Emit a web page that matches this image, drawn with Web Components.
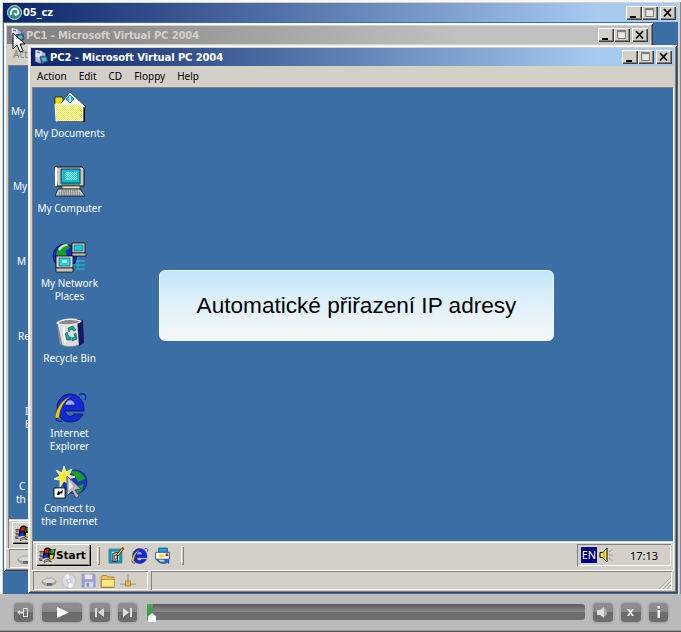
<!DOCTYPE html>
<html>
<head>
<meta charset="utf-8">
<title>05_cz</title>
<style>
  html, body { margin: 0; padding: 0; background: #d4d0c8; overflow: hidden; }
</style>
</head>
<body>
<player-app></player-app>

<script>
// pixel-ish icons, all drawn on a 32 unit box
const ICONS = {
  documents: `
    <defs><pattern id="d" width="2" height="2" patternUnits="userSpaceOnUse"><rect width="2" height="2" fill="#f0ec20"/><rect width="1" height="1" fill="#fff"/><rect x="1" y="1" width="1" height="1" fill="#fff"/></pattern></defs>
    <path d="M1 6h7l1 2v6H1z" fill="#f0e000" stroke="#000" stroke-width=".6"/>
    <path d="M5 15L16 1l16 15-4 3z" fill="#fff" stroke="#223" stroke-width=".8"/>
    <path d="M16 4l4 4-4 4-4-4z" fill="#18b8e8" stroke="#0870a8" stroke-width=".8"/>
    <path d="M15 5h2v6h-2z" fill="#9ff"/>
    <path d="M3 31h28V17l-3-2v14H3z" fill="#000"/>
    <path d="M1 13h25l3 3v14H2z" fill="url(#d)" stroke="#fff" stroke-width=".8"/>`,
  computer: `
    <defs><pattern id="c" width="2" height="2" patternUnits="userSpaceOnUse"><rect width="2" height="2" fill="#18d8e8"/><rect width="1" height="1" fill="#a8ffff"/><rect x="1" y="1" width="1" height="1" fill="#a8ffff"/></pattern></defs>
    <path d="M1 1h27l2 2v17H3z" fill="#c8c8c0" stroke="#000" stroke-width=".9"/>
    <path d="M1 1h2v19H1z" fill="#fff"/>
    <path d="M7 3h19v15H7z" fill="#18b8d8" stroke="#111" stroke-width=".8"/>
    <path d="M11 6h12v8H11z" fill="url(#c)"/>
    <path d="M7 16h19v2H7z" fill="#00808c"/>
    <path d="M8 20h18v3H8z" fill="#e4e4dc" stroke="#222" stroke-width=".7"/>
    <path d="M4 23h22l5 7H1z" fill="#ccccc4" stroke="#111" stroke-width=".8"/>
    <path d="M7 25h17M5 27h22M5 29h24" stroke="#555" stroke-width="1" stroke-dasharray="1.4 .8"/>`,
  network: `
    <circle cx="11" cy="15" r="12" fill="#1428c0" stroke="#001060" stroke-width=".8"/>
    <path d="M2 14C3 7 8 3 14 3l2 4-5 3 2 4-6 5-2-1zM16 18l4 2-3 6-3-2z" fill="#18a020"/>
    <path d="M4 8c2-3 5-5 9-5l1 2c-4 0-7 2-8 5z" fill="#c8f0b0"/>
    <path d="M18 2h13v10H18z" fill="#d0d0c8" stroke="#000" stroke-width=".8"/>
    <path d="M20 4h9v6h-9z" fill="#18c8e0" stroke="#044" stroke-width=".5"/>
    <path d="M18 12h14v3H18z" fill="#c0c0b8" stroke="#000" stroke-width=".7"/>
    <path d="M2 15h17v12H2z" fill="#d4d4cc" stroke="#000" stroke-width=".8"/>
    <path d="M5 17h11v8H5z" fill="#28d0e8" stroke="#033" stroke-width=".5"/>
    <path d="M8 19h5v3H8z" fill="#b0ffff"/>
    <path d="M2 27h17v4H2z" fill="#c4c4bc" stroke="#000" stroke-width=".7"/>
    <path d="M22 20h9M18 24h13M22 28h9M24 16v12" stroke="#18c8d8" stroke-width="1" fill="none"/>`,
  recycle: `
    <path d="M3 6c6-4 17-5 25-2l1 22c-5 5-15 6-21 3z" fill="#dcdcdc" stroke="#777" stroke-width=".6"/>
    <path d="M23 3l6 1 1 23-5 3z" fill="#181860"/>
    <path d="M3 7c7-5 18-4 24-2-2 3-18 6-24 2z" fill="#888" stroke="#eee" stroke-width="1.2"/>
    <path d="M3 8l5 21c-2-1-2-1-2-1z" fill="#999"/>
    <path d="M9 11h2l1 17-2-1z" fill="#fff"/>
    <path d="M14 12l5-2 3 4-2 1-3-2-2 3zM22 17l1 6-5 2v-3l3-1-1-3zM13 24l-2-6 2-2 2 5 2 0v3z" fill="#10a8a8" stroke="#044" stroke-width=".5"/>`,
  ie: `
    <path d="M25 4c5-3 8 0 6 5M3 25c-2 4 0 6 5 5" fill="none" stroke="#1020c0" stroke-width="1.4"/>
    <path d="M16 3C9 3 3 9 3 17s6 14 13 14c6 0 11-3 13-8h-9c-1 2-3 3-5 2-2 0-4-3-4-5h19c1-9-5-17-14-17z" fill="#1428d8" stroke="#000a70" stroke-width=".8"/>
    <path d="M11 14c0-3 3-5 5-5s5 2 5 5z" fill="#9fb0f4" stroke="#000a70" stroke-width=".5"/>
    <path d="M1 27C2 18 7 9 17 5c-7 5-11 12-12 22z" fill="#e8c818" stroke="#443" stroke-width=".5"/>`,
  connect: `
    <circle cx="21" cy="16" r="12" fill="#1838c0" stroke="#001060" stroke-width=".6"/>
    <path d="M16 6c6-3 12 0 15 7l-7 3-3-6zM23 20l7-2-3 8-5 2z" fill="#18a020"/>
    <path d="M10 0l2 6 6-3-3 6 6 2-7 2 2 6-6-4-4 6 0-7-6-1 6-3-4-6 6 3z" fill="#f8f020" stroke="#fff" stroke-width=".8"/>
    <path d="M12 7l2 3 3-1-2 3-3-1z" fill="#fff"/>
    <path d="M13 10v20l5-5 4 7 3-2-4-6 6-1z" fill="#b8b8b8" stroke="#504878" stroke-width="1"/>
    <path d="M15 14v10l4-3z" fill="#eee"/>
    <path d="M0 22h11v10H0z" fill="#fff" stroke="#000" stroke-width=".8"/>
    <path d="M3 29l1-4 2 1 3-2-1 4-1-1-2 2z" fill="#000"/>`,
  vpc: `
    <path d="M5 2l12 2 8 5v12l-10 8-11-4z" fill="#b4b4dc" stroke="#505088" stroke-width="1.400"/>
    <path d="M5 2l12 2v14L5 16z" fill="#e4e4f4"/>
    <path d="M8 5l6 1v3l-6-1z" fill="#7878b0"/>
    <path d="M14 15l14-1 2 11-13 5z" fill="#2878a8" stroke="#103858" stroke-width="1.200"/>
    <path d="M18 18l8-1 1 6-8 2z" fill="#58c0a0"/>`,
  flag: `
    <g transform="translate(0 -4) scale(1.05 1.4)">
    <path d="M9 6c4-3 8-3 11-1l-3 13c-3-2-7-2-11 1z" fill="#000"/>
    <path d="M20 5c3 2 6 2 10 0l-3 13c-3 2-7 2-10 0z" fill="#000"/>
    <path d="M11 7c2-1 5-2 7-1l-1 5c-2-1-5 0-7 1z" fill="#e81010"/>
    <path d="M21 6c2 1 5 1 7 0l-1 5c-2 1-5 1-7 0z" fill="#10b020"/>
    <path d="M9 14c2-1 5-2 7-1l-1 5c-2-1-5 0-7 1z" fill="#1830e8"/>
    <path d="M20 13c2 1 4 1 6 0l-1 5c-2 1-4 1-6 0z" fill="#f0e000"/>
    <path d="M9 22c4-3 8-3 11-1l2 2c-4-2-8-2-12 1zM1 9h8M2 11h7M1 14h6M2 16h5M0 19h6M1 21h5" stroke="#000" stroke-width="1" fill="none"/>
    <path d="M1 9h3M1 14h3M0 19h3" stroke="#e01010" stroke-width="1"/>
    <path d="M1 11h3M1 16h3M1 21h3" stroke="#1830e8" stroke-width="1"/>
    </g>`,
  desktop: `
    <path d="M2 4h24v26H2z" fill="#f0f0e8" stroke="#000" stroke-width="1"/>
    <path d="M2 4h24v26H2zM7 9v16h14V9z" fill="#1090c0" fill-rule="evenodd"/>
    <path d="M9 12l9-2v16l-9 1z" fill="#d4d0c8" stroke="#000" stroke-width="1.500"/>
    <path d="M12 16l5-1v7l-5 1z" fill="#fff" stroke="#000" stroke-width="1.200"/>
    <path d="M16 15L27 1l3 2-11 14z" fill="#f0d020" stroke="#000" stroke-width="1.200"/>
    <path d="M27 1l3 2-2 2-3-2z" fill="#e02020"/>`,
  outlook: `
    <path d="M9 2h16v8H9z" fill="#18a8e0" stroke="#003878" stroke-width="1.400"/>
    <path d="M3 10h26v13H3z" fill="#fff" stroke="#003878" stroke-width="1.400"/>
    <path d="M9 13h9v7H9z" fill="#f8e030"/>
    <path d="M22 12h5v5h-5z" fill="#e82020"/>
    <path d="M8 24c2 5 9 6 14 3l-3-3h9v7l-3-2c-6 4-16 2-20-5z" fill="#1878d8" stroke="#003878" stroke-width="1"/>`,
  speaker: `
    <path d="M2 11h5l9-9v28l-9-9H2z" fill="#f4ec40" stroke="#000" stroke-width="2"/>
    <path d="M10 8v16" stroke="#a89800" stroke-width="2"/>
    <path d="M20 16h8M20 10l7-5M20 22l7 5" stroke="#999" stroke-width="2"/>`,
  disk: `
    <path d="M2 16l10-6h10l8 6v4l-8 5H10l-8-5z" fill="#a8a8a8" stroke="#777" stroke-width="1"/>
    <path d="M2 16l9 4h11l8-4-8-5H11z" fill="#d8d8d8"/>
    <path d="M12 20h10v5H12z" fill="#666"/>`,
  cd: `
    <circle cx="16" cy="16" r="14" fill="#dcdce8" stroke="#b0b0b8" stroke-width="1.400"/>
    <path d="M16 16L7 6a14 14 0 0 1 9-4zM16 16l9 10a14 14 0 0 1-9 4z" fill="#f8f8ff"/>
    <circle cx="16" cy="16" r="4" fill="#fff" stroke="#a8a8b0" stroke-width="1.400"/>`,
  floppy: `
    <path d="M2 2h26l2 2v26H2z" fill="#9aa0d8" stroke="#8088b8" stroke-width="1"/>
    <path d="M8 3h16v10H8z" fill="#e8e8f0"/>
    <path d="M8 19h18v11H8z" fill="#d8d8e4"/>
    <path d="M12 21h5v8h-5z" fill="#8088b8"/>`,
  folder: `
    <path d="M2 8l2-3h9l3 3h12v21H2z" fill="#e8c450" stroke="#a08020" stroke-width="1.600"/>
    <path d="M3 13h26v15H3z" fill="#fbe78c" stroke="#a08020" stroke-width="1.200"/>`,
  lan: `
    <path d="M16 3v14" stroke="#a0a0a0" stroke-width="3"/>
    <path d="M0 22h32" stroke="#999" stroke-width="3"/>
    <path d="M0 20h32" stroke="#eee" stroke-width="1"/>
    <path d="M11 16h10v10H11z" fill="#e8b840" stroke="#a87810" stroke-width="1.400"/>`
};

// what is left uncovered of the back window's icon labels: [indent, text] per line
const BACK_LABELS = [
  [[2, 'My']],
  [[4, 'My']],
  [[8, 'M']],
  [[9, 'Re']],
  [[16, 'I'], [16, 'E']],
  [[10, 'C'], [7, 'th']]
];

class WinIcon extends HTMLElement {
  connectedCallback() {
    const size = this.getAttribute('size') || 32;
    this.attachShadow({ mode: 'open' });
    this.shadowRoot.innerHTML = `
      <style>
        :host { display: block; width: ${size}px; height: ${size}px; flex: none; }
        svg { display: block; width: 100%; height: 100%; overflow: visible; }
      </style>
      <svg viewBox="0 0 32 32">${ICONS[this.getAttribute('name')]}</svg>`;
  }
}

class CaptionButton extends HTMLElement {
  connectedCallback() {
    const kind = this.getAttribute('kind');
    const glyph = {
      min: '<path d="M4 10h6v2H4z" fill="#000"/>',
      max: '<path d="M3.500 2.500h8v8h-8z" fill="none" stroke="#808080"/><path d="M3 2h9v2H3z" fill="#808080"/><path d="M5 5h6v5H5z" fill="#e8e6e0"/>',
      close: '<path d="M4 3l7 7.500M11 3l-7 7.500" fill="none" stroke="#000" stroke-width="1.800"/>'
    }[kind];
    this.attachShadow({ mode: 'open' });
    this.shadowRoot.innerHTML = `
      <style>
        :host {
          display: block; width: 16px; height: 14px; flex: none;
          background: #d4d0c8;
          box-shadow: inset 1px 1px 0 #fff, inset -1px -1px 0 #404040, inset -2px -2px 0 #808080;
        }
        :host([kind=close]) { margin-left: 2px; }
        svg { display: block; width: 15px; height: 14px; }
      </style>
      <svg viewBox="0 0 15 14">${glyph}</svg>`;
  }
}

class TitleBar extends HTMLElement {
  connectedCallback() {
    this.attachShadow({ mode: 'open' });
    this.shadowRoot.innerHTML = `
      <style>
        :host {
          display: flex; align-items: center; height: var(--title-h, 18px); flex: none;
          padding: 0 2px; gap: 1px; overflow: hidden;
          background: linear-gradient(90deg, #0a246a 0%, #a6caf0 88%, #a6caf0 100%);
          color: #fff;
          font: bold 10px "DejaVu Sans", sans-serif;
          letter-spacing: -0.12px;
          white-space: nowrap;
        }
        :host([inactive]) {
          background: linear-gradient(90deg, #808080 0%, #c0c0c0 70%);
          color: #d4d0c8;
        }
        .text { flex: 1; }
        .btns { display: flex; }
      </style>
      <slot name="icon"></slot>
      <span class="text"><slot></slot></span>
      <span class="btns">
        <caption-button kind="min"></caption-button>
        <caption-button kind="max"></caption-button>
        <caption-button kind="close"></caption-button>
      </span>`;
  }
}

class DesktopIcon extends HTMLElement {
  connectedCallback() {
    this.attachShadow({ mode: 'open' });
    this.shadowRoot.innerHTML = `
      <style>
        :host {
          display: flex; flex-direction: column; align-items: center;
          width: 73px; color: #fff; text-align: center;
        }
        .label { margin-top: 4px; line-height: 13px; width: 72px; }
      </style>
      <win-icon name="${this.getAttribute('icon')}"></win-icon>
      <div class="label"><slot></slot></div>`;
  }
}

class VmTaskbar extends HTMLElement {
  connectedCallback() {
    this.attachShadow({ mode: 'open' });
    this.shadowRoot.innerHTML = `
      <style>
        :host {
          display: flex; align-items: center; height: 29px; flex: none;
          padding: 0 3px 2px 3px; box-sizing: border-box; background: #d4d0c8;
          box-shadow: inset 0 1px 0 #d4d0c8, inset 0 2px 0 #fff;
        }
        .start {
          display: flex; align-items: center; height: 22px; width: 55px; box-sizing: border-box;
          padding-left: 3px; margin-top: 1px; font: bold 10.500px "DejaVu Sans", sans-serif; color: #000;
          box-shadow: inset 1px 1px 0 #fff, inset -1px -1px 0 #000, inset -2px -2px 0 #808080;
        }
        .grip {
          width: 3px; height: 19px; margin-top: 1px; flex: none;
          box-shadow: inset 1px 1px 0 #fff, inset -1px -1px 0 #808080;
        }
        .quick { display: flex; gap: 6px; margin: 1px 10px 0 8px; }
        .spacer { flex: 1; }
        .tray {
          display: flex; align-items: center; width: 94px; height: 22px; box-sizing: border-box;
          margin-top: 1px; padding-left: 4px; margin-right: -1px;
          box-shadow: inset 1px 1px 0 #808080, inset -1px -1px 0 #fff;
        }
        .en {
          width: 16px; height: 16px; background: #000080; color: #fff; font-size: 11px;
          line-height: 16px; text-align: center;
        }
        .clock { margin-left: 15px; color: #000; font-size: 11px; }
        win-icon.sp { margin-left: 2px; }
      </style>
      <div class="start"><win-icon name="flag" size="17"></win-icon><span>Start</span></div>
      <div class="grip" style="margin-left:6px"></div>
      <div class="quick">
        <win-icon name="desktop" size="17"></win-icon>
        <win-icon name="ie" size="17"></win-icon>
        <win-icon name="outlook" size="17"></win-icon>
      </div>
      <div class="grip"></div>
      <div class="spacer"></div>
      <div class="tray">
        <div class="en">EN</div>
        <win-icon class="sp" name="speaker" size="16"></win-icon>
        <div class="clock">17:13</div>
      </div>`;
  }
}

class VmStatus extends HTMLElement {
  connectedCallback() {
    this.attachShadow({ mode: 'open' });
    this.shadowRoot.innerHTML = `
      <style>
        :host {
          display: flex; gap: 3px; height: 19px; flex: none; margin-top: 1px; padding: 0 2px;
          box-shadow: 0 -1px 0 #fff;
        }
        .icons {
          display: flex; align-items: center; gap: 4px; width: 115px; box-sizing: border-box; padding-left: 8px;
          box-shadow: inset 1px 1px 0 #808080, inset -1px -1px 0 #fff;
        }
        .rest {
          flex: 1; position: relative;
          box-shadow: inset 1px 1px 0 #808080, inset -1px -1px 0 #fff;
        }
        svg { position: absolute; right: 1px; bottom: 1px; }
      </style>
      <div class="icons">
        <win-icon name="disk" size="16"></win-icon>
        <win-icon name="cd" size="16"></win-icon>
        <win-icon name="floppy" size="15"></win-icon>
        <win-icon name="folder" size="16"></win-icon>
        <win-icon name="lan" size="16"></win-icon>
      </div>
      <div class="rest">
        <svg width="12" height="12" viewBox="0 0 12 12">
          <path d="M12 0v1L1 12H0zM12 4v1L5 12H4zM12 8v1L9 12H8z" fill="#808080"/>
          <path d="M12 1v1L2 12H1zM12 5v1L6 12H5zM12 9v1L10 12H9z" fill="#fff"/>
        </svg>
      </div>`;
  }
}

class VmWindow extends HTMLElement {
  connectedCallback() {
    const inactive = this.hasAttribute('inactive');
    // the back window only ever shows the first menu entry, the rest lie under PC2
    const menu = inactive ? ['Action'] : ['Action', 'Edit', 'CD', 'Floppy', 'Help'];
    const icons = inactive
      ? BACK_LABELS.map(lines => `<div class="back">${lines.map(([x, t]) => `<div style="padding-left:${x}px">${t}</div>`).join('')}</div>`).join('')
      : `<desktop-icon icon="documents">My Documents</desktop-icon>
         <desktop-icon icon="computer">My Computer</desktop-icon>
         <desktop-icon icon="network">My Network<br>Places</desktop-icon>
         <desktop-icon icon="recycle">Recycle Bin</desktop-icon>
         <desktop-icon icon="ie">Internet<br>Explorer</desktop-icon>
         <desktop-icon icon="connect">Connect to<br>the Internet</desktop-icon>`;
    this.attachShadow({ mode: 'open' });
    this.shadowRoot.innerHTML = `
      <style>
        :host {
          position: absolute; display: flex; flex-direction: column;
          width: 649px; height: 548px; box-sizing: border-box; padding: 3px;
          background: #d4d0c8;
          box-shadow: inset 1px 1px 0 #f4f2ec, inset -1px -1px 0 #404040, inset 2px 2px 0 #fff, inset -2px -2px 0 #808080;
          font: 10px "Noto Sans", sans-serif;
        }
        .menu {
          display: flex; gap: 12px; height: 19px; padding-bottom: 1px; flex: none; align-items: center;
          padding-left: 6px; color: #000;
        }
        :host([inactive]) .menu { color: #808080; }
        .screen {
          flex: 1; min-height: 0; display: flex; flex-direction: column;
          margin: 1px 0 0 1px; position: relative; overflow: hidden;
          border-top: 1px solid #808080; border-left: 1px solid #808080;
          border-right: 1px solid #fff; background: #3a6ea5;
        }
        .desktop {
          flex: 1; min-height: 0; position: relative;
          display: grid; grid-auto-rows: 75px; justify-content: start; padding-top: 3px;
        }
        .back { padding-top: 36px; line-height: 13px; color: #fff; }
      </style>
      <title-bar ${inactive ? 'inactive' : ''}>
        <win-icon slot="icon" name="vpc" size="16"></win-icon>
        ${this.getAttribute('label')}
      </title-bar>
      <div class="menu">${menu.map(m => `<span>${m}</span>`).join('')}</div>
      <div class="screen">
        <div class="desktop">
          ${icons}
          <slot></slot>
        </div>
        <vm-taskbar></vm-taskbar>
      </div>
      <vm-status></vm-status>`;
  }
}

class SlideCaption extends HTMLElement {
  connectedCallback() {
    this.attachShadow({ mode: 'open' });
    this.shadowRoot.innerHTML = `
      <style>
        :host {
          position: absolute; left: 126px; top: 182px; width: 395px; height: 71px;
          display: flex; align-items: center; justify-content: center; box-sizing: border-box;
          border-radius: 6px; border: 1px solid #eef8ff;
          background: linear-gradient(180deg, #c2e6fb 0%, #dcf0fb 40%, #f3f6f7 90%);
          color: #000; font: 22.600px "Liberation Sans", Arial, sans-serif;
        }
      </style>
      <slot></slot>`;
  }
}

class PlayerButton extends HTMLElement {
  connectedCallback() {
    const w = this.getAttribute('width') || 19;
    const glyph = {
      back: '<path d="M3 9l3-2v1.500h3V5h5v9H9v-3.500H6V12z M10 6v7h3V6z" fill="#ddd" fill-rule="evenodd"/>',
      play: '<path d="M15 4l12 5.500L15 15z" fill="#fff"/>',
      prev: '<path d="M5 5h2v9H5zM14 5v9l-6-4.500z" fill="#d8d8d8"/>',
      next: '<path d="M5 5v9l6-4.500zM12 5h2v9h-2z" fill="#e0e0e0"/>',
      sound: '<path d="M4 7h3l4-3v11l-4-3H4z" fill="#ddd"/><path d="M12 5a6 6 0 0 1 0 9l-1-1V6z" fill="#aaa"/>',
      close: '<path d="M6 6h2l1.500 2 1.500-2h2l-2.500 3.500L13 13h-2l-1.500-2L8 13H6l2.500-3.500z" fill="#eee"/>',
      info: '<path d="M8.500 3h2.500v2.500H8.500zM8.500 7h2.500v8H8.500z" fill="#eee"/>'
    }[this.getAttribute('glyph')];
    this.attachShadow({ mode: 'open' });
    this.shadowRoot.innerHTML = `
      <style>
        :host {
          display: block; position: relative; flex: none; width: ${w}px; height: 19px; border-radius: 4px;
          background: linear-gradient(180deg, #8f8f8f 0%, #888 50%, #6b6b6b 50%, #6e6e6e 100%);
          box-shadow: 0 0 0 1px #a9a9a9, 0 0 0 2px #b2b2b2;
        }
        svg { display: block; width: 100%; height: 100%; }
      </style>
      <svg viewBox="0 0 ${w} 19">${glyph}</svg>`;
  }
}

class PlayerControls extends HTMLElement {
  connectedCallback() {
    this.attachShadow({ mode: 'open' });
    this.shadowRoot.innerHTML = `
      <style>
        :host {
          display: flex; align-items: center; height: 38px; flex: none; box-sizing: border-box;
          padding: 0 13px 2px 14px; background: #bababa;
          box-shadow: inset 0 -1px 0 #555, inset 0 -2px 0 #999;
        }
        .group { display: flex; gap: 8px; }
        .track {
          flex: 1; height: 16px; margin: 0 8px 0 10px; position: relative; border-radius: 1px 3px 3px 1px;
          background: linear-gradient(180deg, #5c5c5c 0%, #8a8a8a 50%, #6e6e6e 50%, #707070 100%);
        }
        .done {
          position: absolute; left: 0; top: 0; width: 6px; height: 100%;
          background: linear-gradient(180deg, #55a055, #2f9a3a);
        }
        .knob {
          position: absolute; left: 1px; top: 9px; width: 8px; height: 9px; background: #fff;
          clip-path: polygon(50% 0, 100% 40%, 100% 100%, 0 100%, 0 40%);
        }
      </style>
      <div class="group">
        <player-button glyph="back"></player-button>
        <player-button glyph="play" width="40" style="margin-left:1px"></player-button>
        <player-button glyph="prev" width="20"></player-button>
        <player-button glyph="next"></player-button>
      </div>
      <div class="track"><div class="done"></div><div class="knob"></div></div>
      <div class="group">
        <player-button glyph="sound" width="20"></player-button>
        <player-button glyph="close" width="20"></player-button>
        <player-button glyph="info"></player-button>
      </div>`;
  }
}

class PlayerApp extends HTMLElement {
  connectedCallback() {
    this.attachShadow({ mode: 'open' });
    this.shadowRoot.innerHTML = `
      <style>
        :host {
          display: flex; flex-direction: column; position: relative;
          width: 681px; height: 632px; overflow: hidden; background: #d4d0c8;
        }
        .frame {
          flex: 1; min-height: 0; display: flex; flex-direction: column;
          padding: 3px 3px 0 3px;
          box-shadow: inset 1px 1px 0 #f8f6f0, inset 2px 2px 0 #fff, inset -1px 0 0 #888;
        }
        .title { --title-h: 19px; }
        .stage { flex: 1; min-height: 0; position: relative; background: #3a6ea5; }
        .logo { display: block; width: 15px; height: 15px; margin-left: 2px; }
        .pc1 { left: 1px; top: 1px; }
        .pc2 { left: 25px; top: 23px; }
        .cursor { position: absolute; left: 12px; top: 32px; }
      </style>
      <div class="frame">
        <title-bar class="title">
          <svg slot="icon" class="logo" viewBox="0 0 15 15">
            <circle cx="7.500" cy="7.500" r="7" fill="#2f8f80" stroke="#c8e0d8" stroke-width="1"/>
            <path d="M4 10c-1-4 2-7 5-6 3 1 3 5 0 6l-2-2" fill="none" stroke="#fff" stroke-width="1.800"/>
          </svg>
          05_cz
        </title-bar>
        <div class="stage">
          <vm-window class="pc1" label="PC1 - Microsoft Virtual PC 2004" inactive></vm-window>
          <vm-window class="pc2" label="PC2 - Microsoft Virtual PC 2004">
            <slide-caption>Automatické přiřazení IP adresy</slide-caption>
          </vm-window>
        </div>
      </div>
      <player-controls></player-controls>
      <svg class="cursor" width="14" height="22" viewBox="0 0 14 22">
        <path d="M1 1v16l4-4 3 7 3-1-3-7h5z" fill="#fff" stroke="#000" stroke-width="1"/>
      </svg>`;
  }
}

customElements.define('win-icon', WinIcon);
customElements.define('caption-button', CaptionButton);
customElements.define('title-bar', TitleBar);
customElements.define('desktop-icon', DesktopIcon);
customElements.define('vm-taskbar', VmTaskbar);
customElements.define('vm-status', VmStatus);
customElements.define('slide-caption', SlideCaption);
customElements.define('player-button', PlayerButton);
customElements.define('player-controls', PlayerControls);
customElements.define('vm-window', VmWindow);
customElements.define('player-app', PlayerApp);
</script>
</body>
</html>
